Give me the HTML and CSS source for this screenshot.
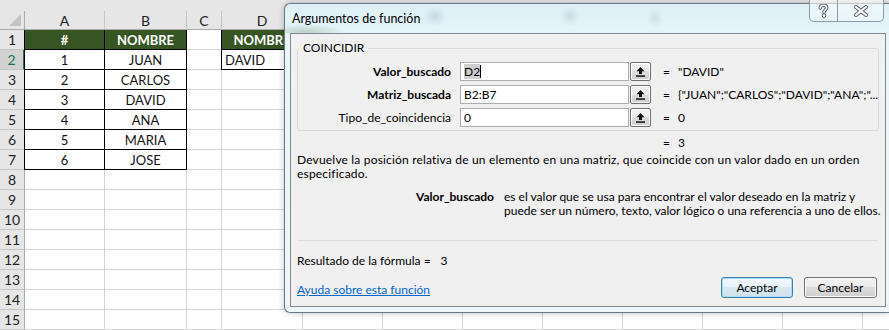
FILE: index.html
```html
<!DOCTYPE html>
<html lang="es">
<head>
    <meta charset="UTF-8">
    <title>Argumentos de función</title>
    <link rel="stylesheet" href="styles.css">
</head>
<body>
    <!-- hoja de cálculo -->
    <div class="sheet">
        <div class="corner"><span class="corner-mark"></span></div>
        <div class="col-hd">A</div>
        <div class="col-hd">B</div>
        <div class="col-hd">C</div>
        <div class="col-hd">D</div>
        <div class="col-hd fill"></div>

        <div class="row-hd">1</div>
        <div class="cell head tb tl">#</div>
        <div class="cell head tb">NOMBRE</div>
        <div class="cell"></div>
        <div class="cell head tb tl">NOMBRE</div>
        <div class="cell fill"></div>

        <div class="row-hd active">2</div>
        <div class="cell tb tl">1</div>
        <div class="cell tb">JUAN</div>
        <div class="cell"></div>
        <div class="cell tb tl left">DAVID</div>
        <div class="cell fill"></div>

        <div class="row-hd">3</div>
        <div class="cell tb tl">2</div>
        <div class="cell tb">CARLOS</div>
        <div class="cell"></div><div class="cell"></div><div class="cell fill"></div>

        <div class="row-hd">4</div>
        <div class="cell tb tl">3</div>
        <div class="cell tb">DAVID</div>
        <div class="cell"></div><div class="cell"></div><div class="cell fill"></div>

        <div class="row-hd">5</div>
        <div class="cell tb tl">4</div>
        <div class="cell tb">ANA</div>
        <div class="cell"></div><div class="cell"></div><div class="cell fill"></div>

        <div class="row-hd">6</div>
        <div class="cell tb tl">5</div>
        <div class="cell tb">MARIA</div>
        <div class="cell"></div><div class="cell"></div><div class="cell fill"></div>

        <div class="row-hd">7</div>
        <div class="cell tb tl">6</div>
        <div class="cell tb">JOSE</div>
        <div class="cell"></div><div class="cell"></div><div class="cell fill"></div>

        <div class="row-hd">8</div>
        <div class="cell"></div><div class="cell"></div><div class="cell"></div><div class="cell"></div><div class="cell fill"></div>
        <div class="row-hd">9</div>
        <div class="cell"></div><div class="cell"></div><div class="cell"></div><div class="cell"></div><div class="cell fill"></div>
        <div class="row-hd">10</div>
        <div class="cell"></div><div class="cell"></div><div class="cell"></div><div class="cell"></div><div class="cell fill"></div>
        <div class="row-hd">11</div>
        <div class="cell"></div><div class="cell"></div><div class="cell"></div><div class="cell"></div><div class="cell fill"></div>
        <div class="row-hd">12</div>
        <div class="cell"></div><div class="cell"></div><div class="cell"></div><div class="cell"></div><div class="cell fill"></div>
        <div class="row-hd">13</div>
        <div class="cell"></div><div class="cell"></div><div class="cell"></div><div class="cell"></div><div class="cell fill"></div>
        <div class="row-hd">14</div>
        <div class="cell"></div><div class="cell"></div><div class="cell"></div><div class="cell"></div><div class="cell fill"></div>

        <div class="row-hd">15</div>
        <div class="cell"></div><div class="cell"></div><div class="cell"></div><div class="cell"></div>
        <div class="cell"></div><div class="cell"></div><div class="cell"></div><div class="cell"></div>
        <div class="cell"></div><div class="cell"></div><div class="cell"></div><div class="cell"></div>
    </div>

    <!-- cuadro de diálogo -->
    <div class="dialog">
        <div class="titlebar">
            <span class="title">Argumentos de función</span>
            <div class="caption-btns">
                <span class="cap-btn help">
                    <svg width="11" height="14" viewBox="0 0 11 14">
                        <path d="M2.3 4 C2.3 2 3.8 1.2 5.5 1.2 C7.4 1.2 8.7 2.3 8.7 3.8 C8.7 5.6 6 6 6 8.3" fill="none" stroke="#5a5f66" stroke-width="3.6" stroke-linecap="round"/>
                        <path d="M2.3 4 C2.3 2 3.8 1.2 5.5 1.2 C7.4 1.2 8.7 2.3 8.7 3.8 C8.7 5.6 6 6 6 8.3" fill="none" stroke="#fff" stroke-width="1.6" stroke-linecap="round"/>
                        <circle cx="6" cy="11.6" r="1.8" fill="#fff" stroke="#5a5f66" stroke-width="1"/>
                    </svg>
                </span>
                <span class="cap-btn close">
                    <svg width="14" height="12" viewBox="0 0 14 12">
                        <path d="M2 2 L12 10 M12 2 L2 10" stroke="#5a5f66" stroke-width="4" stroke-linecap="square"/>
                        <path d="M2 2 L12 10 M12 2 L2 10" stroke="#fff" stroke-width="2" stroke-linecap="square"/>
                    </svg>
                </span>
            </div>
        </div>

        <div class="client">
            <fieldset class="func-box">
                <legend>COINCIDIR</legend>
                <div class="arg-row">
                    <span class="arg-name bold">Valor_buscado</span>
                    <div class="arg-field">
                        <span class="arg-input"><span class="sel">D2</span><span class="caret"></span></span>
                        <span class="ref-btn"><svg width="9" height="10" viewBox="0 0 9 10"><path d="M4.5 0 L8.5 4.2 H6 V7 H3 V4.2 H0.5 Z" fill="#111"/><rect x="0" y="8.3" width="9" height="1.5" fill="#111"/></svg></span>
                    </div>
                    <span class="arg-val"><span class="eq">=</span>"DAVID"</span>
                </div>
                <div class="arg-row">
                    <span class="arg-name bold">Matriz_buscada</span>
                    <div class="arg-field">
                        <span class="arg-input">B2:B7</span>
                        <span class="ref-btn"><svg width="9" height="10" viewBox="0 0 9 10"><path d="M4.5 0 L8.5 4.2 H6 V7 H3 V4.2 H0.5 Z" fill="#111"/><rect x="0" y="8.3" width="9" height="1.5" fill="#111"/></svg></span>
                    </div>
                    <span class="arg-val"><span class="eq">=</span>{"JUAN";"CARLOS";"DAVID";"ANA";"...</span>
                </div>
                <div class="arg-row">
                    <span class="arg-name">Tipo_de_coincidencia</span>
                    <div class="arg-field">
                        <span class="arg-input">0</span>
                        <span class="ref-btn"><svg width="9" height="10" viewBox="0 0 9 10"><path d="M4.5 0 L8.5 4.2 H6 V7 H3 V4.2 H0.5 Z" fill="#111"/><rect x="0" y="8.3" width="9" height="1.5" fill="#111"/></svg></span>
                    </div>
                    <span class="arg-val"><span class="eq">=</span>0</span>
                </div>
            </fieldset>

            <div class="func-result"><span class="eq">=</span>3</div>

            <p class="desc">Devuelve la posición relativa de un elemento en una matriz, que coincide con un valor dado en un orden<br>especificado.</p>

            <div class="arg-help">
                <span class="bold">Valor_buscado</span>
                <p>es el valor que se usa para encontrar el valor deseado en la matriz y<br>puede ser un número, texto, valor lógico o una referencia a uno de ellos.</p>
            </div>

            <div class="sep"></div>

            <p class="result">Resultado de la fórmula =<span class="result-num">3</span></p>

            <div class="footer-row">
                <a href="#ayuda" class="help-link">Ayuda sobre esta función</a>
                <div class="btns">
                    <button class="btn default">Aceptar</button>
                    <button class="btn">Cancelar</button>
                </div>
            </div>
        </div>
    </div>
</body>
</html>
```

FILE: styles.css
```css
/* base */
body {
    margin: 0;
    width: 889px;
    height: 330px;
    overflow: hidden;
    position: relative;
    background-color: #fff;
    font-family: Lato, "Open Sans", sans-serif;
    color: #000;
}

/* hoja */
.sheet {
    display: grid;
    grid-template-columns: 25px 80px 82px 35px 81px repeat(8, 80px);
    grid-template-rows: 30px repeat(15, 20px);
    width: 889px;
    overflow: hidden;
    background-color: #e6e6e6;
    font-size: 13px;
}
.corner {
    position: relative;
    margin-top: 11px;
    border-right: 1px solid #ababab;
    border-bottom: 1px solid #ababab;
}
.corner-mark {
    position: absolute;
    right: 3px;
    bottom: 3px;
    width: 12px;
    height: 12px;
    background-color: #c3c3c3;
    clip-path: polygon(100% 0, 100% 100%, 0 100%);
}
.col-hd {
    margin-top: 11px;
    border-right: 1px solid #c6c6c6;
    border-bottom: 1px solid #ababab;
    display: flex;
    align-items: center;
    justify-content: center;
    color: #222;
    font-size: 14px;
}
.row-hd {
    border-right: 1px solid #ababab;
    border-bottom: 1px solid #c6c6c6;
    display: flex;
    align-items: center;
    justify-content: center;
    color: #222;
    font-size: 14px;
}
.row-hd.active {
    background-color: #d2d2d2;
    color: #217346;
    border-right: 2px solid #217346;
}
.cell {
    background-color: #fff;
    border-right: 1px solid #d4d4d4;
    border-bottom: 1px solid #d4d4d4;
    display: flex;
    align-items: center;
    justify-content: center;
    white-space: nowrap;
    overflow: hidden;
    color: #111;
}
.fill {
    grid-column: 6 / -1;
}
.cell.tb {
    border-right-color: #000;
    border-bottom-color: #000;
}
.cell.tl {
    border-left: 1px solid #000;
    margin-left: -1px;
}
.cell.left {
    justify-content: flex-start;
    padding-left: 3px;
}
.cell.head {
    background-color: #375623;
    color: #fff;
    font-weight: bold;
}

/* diálogo */
.dialog {
    position: absolute;
    left: 284px;
    top: 3px;
    width: 605px;
    height: 310px;
    box-sizing: border-box;
    border: 1px solid #6d7780;
    border-right: none;
    border-radius: 6px 0 0 6px;
    background: linear-gradient(#dcf1f7, #e9f6fa 40px, #eef6f9);
    box-shadow: 0 0 6px rgba(0, 0, 0, 0.25);
    font-size: 12px;
}
.titlebar {
    height: 29px;
    display: flex;
    align-items: center;
    padding-left: 7px;
    background:
        radial-gradient(ellipse 12px 10px at 150px 12px, rgba(150, 170, 180, 0.35), transparent),
        radial-gradient(ellipse 10px 10px at 285px 12px, rgba(150, 170, 180, 0.3), transparent),
        radial-gradient(ellipse 8px 10px at 370px 14px, rgba(150, 170, 180, 0.25), transparent),
        radial-gradient(ellipse 40px 8px at 20px 28px, rgba(70, 100, 50, 0.25), transparent);
}
.title {
    font-size: 12.5px;
    color: #000;
}
.caption-btns {
    position: absolute;
    top: -4px;
    right: 5px;
    height: 22px;
    display: flex;
    border: 1px solid #8c9aa6;
    border-top: none;
    border-radius: 0 0 5px 5px;
    background: linear-gradient(rgba(255, 255, 255, 0.6), rgba(235, 245, 250, 0.6));
    box-sizing: border-box;
}
.cap-btn {
    display: flex;
    align-items: center;
    justify-content: center;
}
.cap-btn.help {
    width: 27px;
    border-right: 1px solid #8c9aa6;
}
.cap-btn.close {
    width: 45px;
}

.client {
    margin-left: 5px;
    width: 596px;
    height: 274px;
    box-sizing: border-box;
    border: 1px solid #828790;
    background-color: #f0f0f0;
    padding: 0 8px 0 6px;
}

/* grupo de argumentos */
.func-box {
    margin: 6px 0 0 0;
    padding: 6px 0 3px 0;
    border: 1px solid #d5dadf;
    border-radius: 3px;
    display: flex;
    flex-direction: column;
    gap: 4px;
}
.func-box legend {
    margin-left: 1px;
    padding: 0 4px;
    line-height: 16px;
}
.arg-row {
    display: grid;
    grid-template-columns: 153px 191px 1fr;
    column-gap: 9px;
    height: 19px;
    align-items: center;
}
.arg-name {
    text-align: right;
}
.bold {
    font-weight: bold;
}
.arg-field {
    display: flex;
    height: 19px;
}
.arg-input {
    width: 169px;
    box-sizing: border-box;
    border: 1px solid #abadb3;
    background-color: #fff;
    padding-left: 3px;
    display: flex;
    align-items: center;
}
.sel {
    background-color: #cfcfcf;
}
.caret {
    width: 1px;
    height: 13px;
    background-color: #000;
}
.ref-btn {
    margin-left: 1px;
    width: 21px;
    box-sizing: border-box;
    border: 1px solid #707070;
    border-radius: 2px;
    box-shadow: inset 0 0 0 1px #fcfcfc;
    background: linear-gradient(#f2f2f2, #ebebeb 50%, #dddddd 50%, #cfcfcf);
    display: flex;
    align-items: center;
    justify-content: center;
}
.arg-val {
    padding-left: 3px;
    white-space: nowrap;
}
.eq {
    display: inline-block;
    width: 15px;
}

.func-result {
    margin-top: 5px;
    padding-left: 366px;
    line-height: 13px;
}
.desc {
    margin: 4px 0 0 0;
    line-height: 14px;
    letter-spacing: 0.18px;
    white-space: nowrap;
}
.arg-help {
    margin-top: 9px;
    display: grid;
    grid-template-columns: 197px 1fr;
    column-gap: 10px;
    line-height: 14px;
}
.arg-help span {
    text-align: right;
}
.arg-help p {
    margin: 0;
    white-space: nowrap;
}
.sep {
    margin-top: 22px;
    height: 1px;
    background-color: #d6dbe0;
}
.result {
    margin: 13px 0 0 0;
    line-height: 13px;
}
.result-num {
    margin-left: 10px;
}

/* pie */
.footer-row {
    margin-top: 10px;
    display: flex;
    align-items: center;
    justify-content: space-between;
}
.help-link {
    color: #0066cc;
    padding-top: 3px;
}
.btns {
    display: flex;
    gap: 11px;
}
.btn {
    font-family: inherit;
    font-size: 12px;
    height: 21px;
    width: 73px;
    box-sizing: border-box;
    border: 1px solid #707070;
    border-radius: 3px;
    box-shadow: inset 0 0 0 1px #fbfbfb;
    background: linear-gradient(#f2f2f2, #ebebeb 50%, #dddddd 50%, #cfcfcf);
    color: #000;
    padding: 0;
}
.btn.default {
    width: 72px;
    border-color: #3c7fb1;
    box-shadow: inset 0 0 0 1px #a8def5;
    background: linear-gradient(#f4f9fc, #e6f1f7 50%, #d8e8f1 50%, #cfe2ed);
}
```
